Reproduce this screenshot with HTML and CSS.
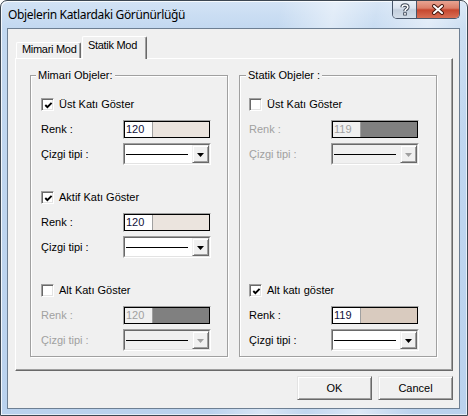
FILE: index.html
```html
<!DOCTYPE html>
<html>
<head>
<meta charset="utf-8">
<link rel="stylesheet" href="styles.css">
</head>
<body>
<div class="window">
  <div class="titlebar">
    <span class="title">Objelerin Katlardaki Görünürlüğü</span>
    <div class="caption-btns">
      <span class="cbtn help"><svg width="10" height="13" viewBox="0 0 10 13"><path d="M2.2 4.2 C2.2 1.2 7.8 1.2 7.8 4.2 C7.8 6.2 5 6.2 5 8.2" fill="none" stroke="#3e4756" stroke-width="3.6"/><rect x="3.2" y="9.3" width="3.6" height="3.2" fill="#3e4756"/><path d="M2.2 4.2 C2.2 1.2 7.8 1.2 7.8 4.2 C7.8 6.2 5 6.2 5 8.2" fill="none" stroke="#fff" stroke-width="1.6"/><rect x="4.1" y="10.1" width="1.8" height="1.6" fill="#fff"/></svg></span>
      <span class="cbtn close"><svg width="14" height="11" viewBox="0 0 14 11"><path d="M3 2 L11 9 M11 2 L3 9" stroke="#4a1a10" stroke-width="4" stroke-linecap="round"/><path d="M3 2 L11 9 M11 2 L3 9" stroke="#fff" stroke-width="2" stroke-linecap="round"/></svg></span>
    </div>
  </div>
  <div class="client">
    <div class="tabs">
      <div class="tab">Mimari Mod</div>
      <div class="tab active">Statik Mod</div>
    </div>
    <div class="panel">
      <div class="group left">
        <div class="legend">Mimari Objeler:</div>
        <div class="section first">
          <div class="check"><span class="cb"><svg width="9" height="9" viewBox="0 0 9 9"><path d="M1.3 4 L3.4 6.2 L7.6 1.8" fill="none" stroke="#000" stroke-width="1.9"/></svg></span><span>Üst Katı Göster</span></div>
          <div class="prop c"><span class="lbl">Renk :</span><span class="color"><span class="color-in"><span class="num">120</span><span class="swatch"></span></span></span></div>
          <div class="prop l"><span class="lbl">Çizgi tipi :</span><span class="combo"><span class="combo-in"><span class="line"></span><span class="drop"><svg width="7" height="4" viewBox="0 0 7 4"><path d="M0 0 H7 L3.5 4 Z" fill="#000"/></svg></span></span></span></div>
        </div>
        <div class="section">
          <div class="check"><span class="cb"><svg width="9" height="9" viewBox="0 0 9 9"><path d="M1.3 4 L3.4 6.2 L7.6 1.8" fill="none" stroke="#000" stroke-width="1.9"/></svg></span><span>Aktif Katı Göster</span></div>
          <div class="prop c"><span class="lbl">Renk :</span><span class="color"><span class="color-in"><span class="num">120</span><span class="swatch"></span></span></span></div>
          <div class="prop l"><span class="lbl">Çizgi tipi :</span><span class="combo"><span class="combo-in"><span class="line"></span><span class="drop"><svg width="7" height="4" viewBox="0 0 7 4"><path d="M0 0 H7 L3.5 4 Z" fill="#000"/></svg></span></span></span></div>
        </div>
        <div class="section dis">
          <div class="check"><span class="cb"></span><span class="on">Alt Katı Göster</span></div>
          <div class="prop c"><span class="lbl">Renk :</span><span class="color"><span class="color-in"><span class="num">120</span><span class="swatch"></span></span></span></div>
          <div class="prop l"><span class="lbl">Çizgi tipi :</span><span class="combo"><span class="combo-in"><span class="line"></span><span class="drop"><svg width="7" height="4" viewBox="0 0 7 4"><path d="M0 0 H7 L3.5 4 Z" fill="#a0a0a0"/></svg></span></span></span></div>
        </div>
      </div>
      <div class="group right">
        <div class="legend">Statik Objeler :</div>
        <div class="section first dis">
          <div class="check"><span class="cb"></span><span class="on">Üst Katı Göster</span></div>
          <div class="prop c"><span class="lbl">Renk :</span><span class="color"><span class="color-in"><span class="num">119</span><span class="swatch"></span></span></span></div>
          <div class="prop l"><span class="lbl">Çizgi tipi :</span><span class="combo"><span class="combo-in"><span class="line"></span><span class="drop"><svg width="7" height="4" viewBox="0 0 7 4"><path d="M0 0 H7 L3.5 4 Z" fill="#a0a0a0"/></svg></span></span></span></div>
        </div>
        <div class="section spacer"></div>
        <div class="section">
          <div class="check"><span class="cb"><svg width="9" height="9" viewBox="0 0 9 9"><path d="M1.3 4 L3.4 6.2 L7.6 1.8" fill="none" stroke="#000" stroke-width="1.9"/></svg></span><span>Alt katı göster</span></div>
          <div class="prop c"><span class="lbl">Renk :</span><span class="color"><span class="color-in"><span class="num">119</span><span class="swatch tan"></span></span></span></div>
          <div class="prop l"><span class="lbl">Çizgi tipi :</span><span class="combo"><span class="combo-in"><span class="line"></span><span class="drop"><svg width="7" height="4" viewBox="0 0 7 4"><path d="M0 0 H7 L3.5 4 Z" fill="#000"/></svg></span></span></span></div>
        </div>
      </div>
    </div>
    <div class="buttons">
      <button class="btn">OK</button>
      <button class="btn">Cancel</button>
    </div>
  </div>
</div>
</body>
</html>
```

FILE: styles.css
```css
html, body {
  margin: 0;
  padding: 0;
  background: #ffffff;
}
body {
  font: 11px "Liberation Sans", Arial, sans-serif;
  color: #000;
}
.window {
  width: 468px;
  height: 416px;
  box-sizing: border-box;
  border: 1px solid #3d4752;
  border-radius: 7px 7px 0 0;
  overflow: hidden;
  display: flex;
  flex-direction: column;
  background:
    linear-gradient(100deg, rgba(255,255,255,0) 52%, rgba(255,255,255,0.45) 62%, rgba(255,255,255,0.1) 70%, rgba(255,255,255,0.5) 80%, rgba(255,255,255,0) 90%),
    linear-gradient(180deg, #d3e3f5 0px, #c2d8f0 28px, #bad2ee 100%);
  box-shadow: inset 1px 1px 0 rgba(255,255,255,0.8), inset -1px -1px 0 rgba(255,255,255,0.6);
}
.titlebar {
  height: 27px;
  flex: none;
  display: flex;
  align-items: center;
  padding-left: 7px;
}
.title {
  font: 12px "Noto Sans", "Open Sans", sans-serif;
  color: #000;
  letter-spacing: -0.35px;
}
.caption-btns {
  margin-left: auto;
  margin-right: 7px;
  align-self: flex-start;
  margin-top: -1px;
  height: 19px;
  box-sizing: border-box;
  display: flex;
  border: 1px solid #48566a;
  border-top: none;
  border-radius: 0 0 5px 5px;
  overflow: hidden;
}
.cbtn {
  display: flex;
  align-items: center;
  justify-content: center;
  height: 100%;
}
.cbtn.help {
  width: 23px;
  border-right: 1px solid #48566a;
  background: linear-gradient(180deg, #eef3f9 0%, #dbe3ee 45%, #c3cfdd 55%, #d3dde9 100%);
}
.cbtn.close {
  width: 42px;
  background: linear-gradient(180deg, #eaa998 0%, #dc7f69 45%, #c6472f 55%, #d86f55 100%);
}
.client {
  flex: 1;
  margin: 0 7px 6px 6px;
  border: 1px solid #6d7f93;
  background: #f0f0f0;
  display: flex;
  flex-direction: column;
  padding: 7px 6px 8px 7px;
}
.tabs {
  display: flex;
  align-items: flex-end;
  height: 22px;
  padding-left: 1px;
  flex: none;
}
.tab {
  width: 65px;
  height: 16px;
  box-sizing: border-box;
  border: 1px solid;
  border-color: #fff #696969 transparent #fff;
  border-bottom: none;
  border-radius: 2px 2px 0 0;
  box-shadow: inset -1px 0 0 #a0a0a0;
  padding: 0 0 0 5px;
  line-height: 13px;
  white-space: nowrap;
  letter-spacing: -0.3px;
}
.tab.active {
  height: 23px;
  margin-bottom: -1px;
  margin-left: 1px;
  padding-top: 2px;
  background: #f0f0f0;
  position: relative;
  z-index: 1;
}
.panel {
  height: 313px;
  box-sizing: border-box;
  border: 1px solid;
  border-color: #fff #696969 #696969 #fff;
  box-shadow: inset -1px -1px 0 #a0a0a0;
  padding: 16px 0 0 14px;
  display: flex;
  gap: 11px;
  flex: none;
}
.group {
  width: 198px;
  height: 282px;
  box-sizing: border-box;
  border: 1px solid #a0a0a0;
  box-shadow: inset 1px 1px 0 #fff, 1px 1px 0 #fff;
  padding-left: 10px;
}
.group.right {
  padding-left: 9px;
}
.legend {
  margin: -7px 0 0 -5px;
  padding: 0 2px;
  width: max-content;
  height: 13px;
  line-height: 13px;
  background: #f0f0f0;
}
.group.right .legend {
  margin-left: -3px;
}
.section {
  margin-top: 26px;
  display: flex;
  flex-direction: column;
}
.section.first {
  margin-top: 16px;
}
.section.spacer {
  height: 67px;
}
.check {
  display: flex;
  align-items: center;
  gap: 5px;
  height: 13px;
  line-height: 13px;
}
.cb {
  width: 13px;
  height: 13px;
  box-sizing: border-box;
  border: 1px solid;
  border-color: #a0a0a0 #fff #fff #a0a0a0;
  box-shadow: inset 1px 1px 0 #696969, inset -1px -1px 0 #e3e3e3;
  background: #fff;
  display: flex;
  align-items: center;
  justify-content: center;
  flex: none;
}
.cb svg {
  display: block;
  margin: 1px 0 0 1px;
}
.prop {
  display: grid;
  grid-template-columns: 82px 88px;
  align-items: center;
}
.prop.c {
  margin-top: 9px;
}
.prop.l {
  margin-top: 4px;
}
.lbl {
  line-height: 13px;
}
.dis .lbl {
  color: #a0a0a0;
}
.color {
  height: 19px;
  box-sizing: border-box;
  border: 1px solid;
  border-color: #a0a0a0 #f0f0f0 #f0f0f0 #a0a0a0;
  display: flex;
}
.color-in {
  flex: 1;
  border: 1px solid #000;
  display: flex;
}
.num {
  width: 26px;
  background: #fff;
  border-right: 1px solid #a0a0a0;
  padding-left: 1px;
  line-height: 15px;
  color: #10103a;
}
.dis .num {
  background: #f0f0f0;
  color: #a0a0a0;
}
.swatch {
  flex: 1;
  background: #ebe4de;
}
.swatch.tan {
  background: #d9cbbf;
}
.dis .swatch {
  background: #808080;
}
.combo {
  height: 22px;
  box-sizing: border-box;
  border: 1px solid;
  border-color: #a0a0a0 #fff #fff #a0a0a0;
  display: flex;
}
.combo-in {
  flex: 1;
  border: 1px solid;
  border-color: #696969 #e3e3e3 #e3e3e3 #696969;
  background: #fff;
  display: flex;
  align-items: center;
}
.dis .combo-in {
  background: #f0f0f0;
}
.line {
  width: 62px;
  height: 1px;
  margin-left: 1px;
  background: #000;
}
.drop {
  margin-left: auto;
  width: 17px;
  height: 18px;
  box-sizing: border-box;
  border: 1px solid;
  border-color: #f0f0f0 #696969 #696969 #f0f0f0;
  box-shadow: inset 1px 1px 0 #fff, inset -1px -1px 0 #a0a0a0;
  background: #f0f0f0;
  display: flex;
  align-items: center;
  justify-content: center;
}
.drop svg {
  display: block;
  margin-top: 1px;
}
.buttons {
  margin-top: 5px;
  display: flex;
  justify-content: flex-end;
  gap: 6px;
  flex: none;
}
.btn {
  width: 75px;
  height: 24px;
  box-sizing: border-box;
  padding: 0;
  font: 11px "Liberation Sans", Arial, sans-serif;
  color: #000;
  background: #f0f0f0;
  border: 1px solid;
  border-color: #e3e3e3 #696969 #696969 #e3e3e3;
  box-shadow: inset 1px 1px 0 #fff, inset -1px -1px 0 #a0a0a0;
}
```
